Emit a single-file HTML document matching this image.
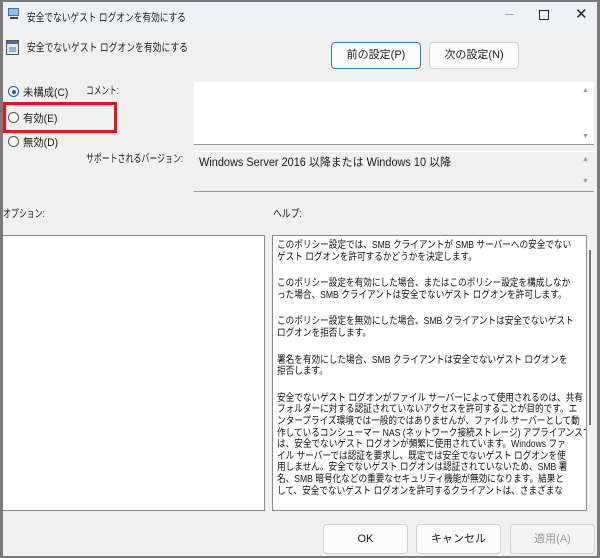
<!DOCTYPE html>
<html><head><meta charset="utf-8"><style>
*{box-sizing:border-box;margin:0;padding:0}
body{width:600px;height:558px;overflow:hidden;background:#7a7a7a;font-family:"Liberation Sans","Noto Sans CJK JP",sans-serif;color:#1a1a1a;position:relative}
.win{position:absolute;left:3px;top:2px;width:594px;height:554px;background:#f0f0f0;overflow:hidden}
.ab{position:absolute;white-space:nowrap;transform-origin:0 0}
.tb{position:absolute;left:0;top:0;width:594px;height:26px;background:#eef2f8}
.lbl{font-size:11px}
.btn{position:absolute;background:#fbfbfb;border:1px solid #d0d0d0;border-radius:4px;font-size:11px;text-align:center}
.radio{position:absolute;width:11px;height:11px;border:1px solid #555;border-radius:50%;background:#fff}
.box{position:absolute;background:#fff;border:1px solid #8a8a8a}
.help{font-size:10.4px;line-height:11.6px;color:#111;transform:scaleX(0.83);transform-origin:0 0}
.help p{margin-bottom:15px;white-space:nowrap}
.arr{position:absolute;font-size:7px;color:#999}
</style></head><body>
<div class="win">
<div class="tb"></div>
<svg class="ab" style="left:4px;top:5px" width="14" height="14"><rect x="1" y="1" width="11" height="8" fill="#3a6fb0"/><rect x="2" y="2" width="9" height="6" fill="#8fc1ef"/><rect x="3" y="10" width="8" height="2" fill="#444"/></svg>
<div class="ab lbl" style="left:24px;top:7px;transform:scaleX(0.79)">安全でないゲスト ログオンを有効にする</div>
<div class="ab" style="left:502px;top:12px;width:9px;height:1px;background:#aaa"></div>
<div class="ab" style="left:536px;top:8px;width:10px;height:10px;border:1.3px solid #222"></div>
<div class="ab" style="left:572px;top:3px;font-size:15px;color:#222">✕</div>

<svg class="ab" style="left:3px;top:38px" width="14" height="16"><rect x="0.5" y="0.5" width="12" height="14" fill="#e8e8e8" stroke="#555"/><rect x="1" y="1" width="11" height="3" fill="#4a6fa8"/><rect x="3" y="7" width="7" height="5" fill="#8fb0d0"/></svg>
<div class="ab lbl" style="left:24px;top:37px;transform:scaleX(0.8)">安全でないゲスト ログオンを有効にする</div>

<div class="btn" style="left:328px;top:40px;width:90px;height:27px;line-height:25px;border:1.5px solid #3b7fb8">前の設定(P)</div>
<div class="btn" style="left:426px;top:40px;width:90px;height:27px;line-height:25px">次の設定(N)</div>

<div class="radio" style="left:5px;top:84px;border:1px solid #1a5fb4"><div style="position:absolute;left:2.5px;top:2.5px;width:4px;height:4px;border-radius:50%;background:#1a5fb4"></div></div>
<div class="ab lbl" style="left:20px;top:82px;transform:scaleX(0.94)">未構成(C)</div>
<div class="radio" style="left:5px;top:110px"></div>
<div class="ab lbl" style="left:20px;top:108px;transform:scaleX(0.94)">有効(E)</div>
<div class="radio" style="left:5px;top:134px"></div>
<div class="ab lbl" style="left:20px;top:132px;transform:scaleX(0.94)">無効(D)</div>
<div class="ab" style="left:0px;top:100px;width:114px;height:31px;border:3px solid #e8131a"></div>

<div class="ab lbl" style="left:83px;top:80px;transform:scaleX(0.7)">コメント:</div>
<div class="ab" style="left:191px;top:80px;width:400px;height:63px;background:#fff;border-bottom:1px solid #999"></div>
<div class="arr" style="left:579px;top:85px">▲</div><div class="arr" style="left:579px;top:131px">▼</div>
<div class="ab lbl" style="left:83px;top:148px;transform:scaleX(0.72)">サポートされるバージョン:</div>
<div class="ab" style="left:191px;top:149px;width:400px;height:41px;background:#f0f0f0;border-top:1px solid #fff;border-bottom:1px solid #999"></div>
<div class="ab" style="left:196px;top:152px;font-size:11.5px;transform:scaleX(0.95)">Windows Server 2016 以降または Windows 10 以降</div>
<div class="arr" style="left:579px;top:154px">▲</div><div class="arr" style="left:579px;top:176px">▼</div>

<div class="ab lbl" style="left:0px;top:203px;transform:scaleX(0.72)">オプション:</div>
<div class="ab lbl" style="left:270px;top:203px;transform:scaleX(0.8)">ヘルプ:</div>
<div class="box" style="left:-3px;top:233px;width:265px;height:276px"></div>
<div class="box" style="left:269px;top:233px;width:315px;height:276px;overflow:hidden;padding:4px 0 0 4px">
<div class="help">
<p>このポリシー設定では、SMB クライアントが SMB サーバーへの安全でない<br>ゲスト ログオンを許可するかどうかを決定します。</p>
<p>このポリシー設定を有効にした場合、またはこのポリシー設定を構成しなか<br>った場合、SMB クライアントは安全でないゲスト ログオンを許可します。</p>
<p>このポリシー設定を無効にした場合、SMB クライアントは安全でないゲスト<br>ログオンを拒否します。</p>
<p>署名を有効にした場合、SMB クライアントは安全でないゲスト ログオンを<br>拒否します。</p>
<p>安全でないゲスト ログオンがファイル サーバーによって使用されるのは、共有<br>フォルダーに対する認証されていないアクセスを許可することが目的です。エ<br>ンタープライズ環境では一般的ではありませんが、ファイル サーバーとして動<br>作しているコンシューマー NAS (ネットワーク接続ストレージ) アプライアンスで<br>は、安全でないゲスト ログオンが頻繁に使用されています。Windows ファ<br>イル サーバーでは認証を要求し、既定では安全でないゲスト ログオンを使<br>用しません。安全でないゲスト ログオンは認証されていないため、SMB 署<br>名、SMB 暗号化などの重要なセキュリティ機能が無効になります。結果と<br>して、安全でないゲスト ログオンを許可するクライアントは、さまざまな</p>
</div></div>
<div class="ab" style="left:586px;top:248px;width:2px;height:175px;background:#777"></div>

<div class="btn" style="left:320px;top:522px;width:85px;height:30px;line-height:28px">OK</div>
<div class="btn" style="left:413px;top:522px;width:85px;height:30px;line-height:28px">キャンセル</div>
<div class="btn" style="left:507px;top:522px;width:85px;height:30px;line-height:28px;color:#999;background:#f5f5f5">適用(A)</div>
</div>
</body></html>
